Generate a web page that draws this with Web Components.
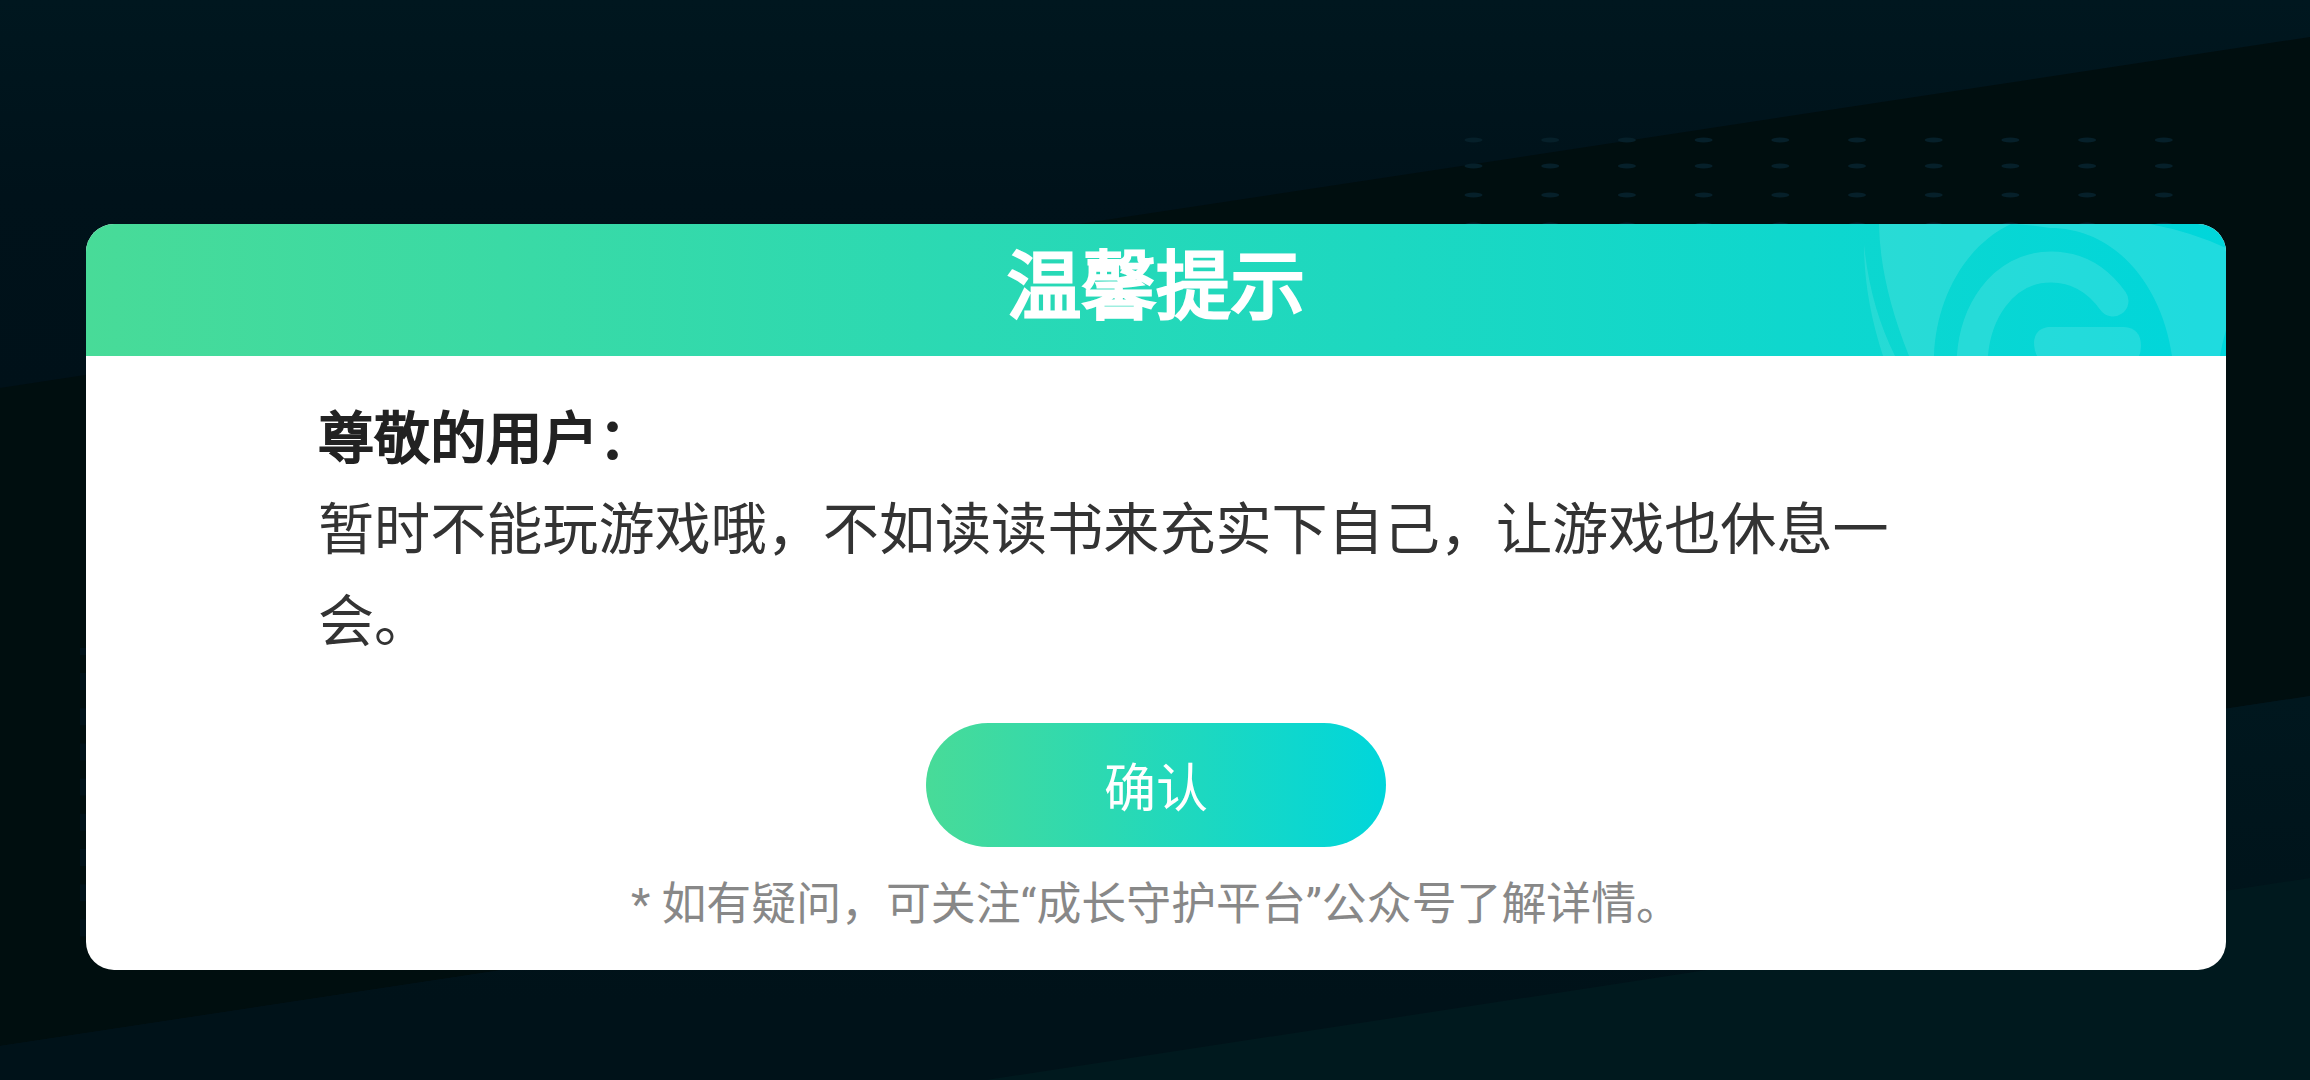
<!DOCTYPE html>
<html lang="zh-CN">
<head>
<meta charset="utf-8">
<title>温馨提示</title>
<style>
  body {
    margin: 0;
    background: #00121a;
    font-family: "Noto Sans CJK SC", sans-serif;
  }
</style>
</head>
<body>

<dialog-backdrop>
  <notice-dialog>
    <span slot="title">温馨提示</span>
    <span slot="greeting">尊敬的用户：</span>
    <span slot="message">暂时不能玩游戏哦，不如读读书来充实下自己，让游戏也休息一会。</span>
    <pill-button slot="action">确认</pill-button>
    <foot-note slot="note">* 如有疑问，可关注“成长守护平台”公众号了解详情。</foot-note>
  </notice-dialog>
</dialog-backdrop>

<script>
const backdropTpl = document.createElement('template');

backdropTpl.innerHTML = `
  <style>
    :host {
      display: flex;
      justify-content: center;
      box-sizing: border-box;
      width: 100vw;
      height: 100vh;
      padding: 224px 84px 110px 86px;
      position: relative;
      overflow: hidden;
    }

    svg {
      position: absolute;
      inset: 0;
      z-index: -1;
    }
  </style>

  <svg width="2310" height="1080" viewBox="0 0 2310 1080">
    <defs>
      <linearGradient id="top" x1="0" y1="0" x2="0" y2="1">
        <stop offset="0" stop-color="#00171f"/>
        <stop offset="0.5" stop-color="#00121a"/>
        <stop offset="1" stop-color="#001119"/>
      </linearGradient>
      <linearGradient id="low" gradientUnits="userSpaceOnUse" x1="0" y1="700" x2="0" y2="1000">
        <stop offset="0" stop-color="#00171e"/>
        <stop offset="1" stop-color="#001219"/>
      </linearGradient>
    </defs>
    <rect width="2310" height="390" fill="url(#top)"/>
    <path d="M0 388 2310 37V696L0 1046z" fill="#000e0f"/>
    <path d="M0 1046 2310 696V1080H0z" fill="url(#low)"/>
    <path d="M986 1080 2310 878V1080z" fill="#00191e"/>
    <g id="dots" fill="#06202a"></g>
    <g id="marks" fill="#00121a"></g>
  </svg>
  <slot></slot>
`;

class DialogBackdrop extends HTMLElement {
  constructor() {
    super();
    this.attachShadow({ mode: 'open' }).appendChild(backdropTpl.content.cloneNode(true));
    this.drawDots();
  }

  drawDots() {
    let dots = '';
    [140, 166, 195, 225].forEach(y => {
      for (let i = 0; i < 10; i++) {
        dots += `<ellipse cx="${1473.5 + i * 76.7}" cy="${y}" rx="9" ry="2.6"/>`;
      }
    });
    this.shadowRoot.getElementById('dots').innerHTML = dots;

    let marks = '<rect x="80" y="648" width="6" height="7"/>';
    for (let i = 0; i < 8; i++) {
      marks += `<rect x="80" y="${673 + i * 35.2}" width="6" height="17"/>`;
    }
    this.shadowRoot.getElementById('marks').innerHTML = marks;
  }
}

const dialogTpl = document.createElement('template');

dialogTpl.innerHTML = `
  <style>
    :host {
      display: flex;
      flex-direction: column;
      width: 2140px;
      height: 746px;
      border-radius: 28px;
      overflow: hidden;
      background: #fff;
    }

    header {
      height: 132px;
      flex: none;
      position: relative;
      background: linear-gradient(90deg, #48db98, #00d6db);
    }

    header svg {
      position: absolute;
      top: 0;
      right: 0;
    }

    h1 {
      margin: 0;
      position: relative;
      text-align: center;
      color: #fff;
      font-size: 74.6px;
      line-height: 112px;
      font-weight: 400;
      -webkit-text-stroke: 3px #fff;
    }

    main {
      padding: 33px 232px 0;
      font-size: 56.1px;
      line-height: 92px;
      color: #333;
    }

    h2,
    p {
      margin: 0;
      font-size: inherit;
    }

    h2 {
      color: #222;
      font-weight: 400;
      line-height: 90px;
      -webkit-text-stroke: 2.2px #222;
    }

    footer {
      display: flex;
      flex-direction: column;
      align-items: center;
      gap: 25px;
      margin-top: 60px;
    }
  </style>

  <header>
    <svg width="380" height="132" viewBox="0 0 380 132" fill="#fff">
      <path fill-opacity=".12" fill-rule="evenodd" d="M33 0H304Q346 8 380 24V106Q376 120 374 132H326C316 62 270 4 204 4Q188 1 165 0C118 22 90 76 88 132H63Q34 60 33 0z"/>
      <path fill-opacity=".11" d="M18 20Q24 82 49 132H37Q18 74 18 20z"/>
      <path fill="none" stroke="#fff" stroke-opacity=".12" stroke-width="31" stroke-linecap="round" d="M126 150C124 88 158 43 205 43C232 43 252 56 267 77"/>
      <path fill-opacity=".12" d="M202 103H278Q295 104 295 122Q295 128 293 132H191Q188 126 188 118Q189 105 202 103z"/>
    </svg>
    <h1><slot name="title"></slot></h1>
  </header>
  <main>
    <h2><slot name="greeting"></slot></h2>
    <p><slot name="message"></slot></p>
  </main>
  <footer>
    <slot name="action"></slot>
    <slot name="note"></slot>
  </footer>
`;

class NoticeDialog extends HTMLElement {
  constructor() {
    super();
    this.attachShadow({ mode: 'open' }).appendChild(dialogTpl.content.cloneNode(true));
  }
}

const buttonTpl = document.createElement('template');

buttonTpl.innerHTML = `
  <style>
    :host {
      display: block;
    }

    button {
      display: block;
      width: 460px;
      height: 124px;
      padding: 0;
      border: none;
      border-radius: 62px;
      background: linear-gradient(90deg, #48db98, #00d6db);
      color: #fff;
      font: 52px/1 "Noto Sans CJK SC", sans-serif;
      cursor: pointer;
    }
  </style>

  <button><slot></slot></button>
`;

class PillButton extends HTMLElement {
  constructor() {
    super();
    this.attachShadow({ mode: 'open' }).appendChild(buttonTpl.content.cloneNode(true));
  }
}

const noteTpl = document.createElement('template');

noteTpl.innerHTML = `
  <style>
    :host {
      display: block;
      font: 44.9px/66px Roboto, "Noto Sans CJK SC", sans-serif;
      color: #888;
      white-space: nowrap;
    }
  </style>

  <slot></slot>
`;

class FootNote extends HTMLElement {
  constructor() {
    super();
    this.attachShadow({ mode: 'open' }).appendChild(noteTpl.content.cloneNode(true));
  }
}

customElements.define('dialog-backdrop', DialogBackdrop);
customElements.define('notice-dialog', NoticeDialog);
customElements.define('pill-button', PillButton);
customElements.define('foot-note', FootNote);
</script>
</body>
</html>
